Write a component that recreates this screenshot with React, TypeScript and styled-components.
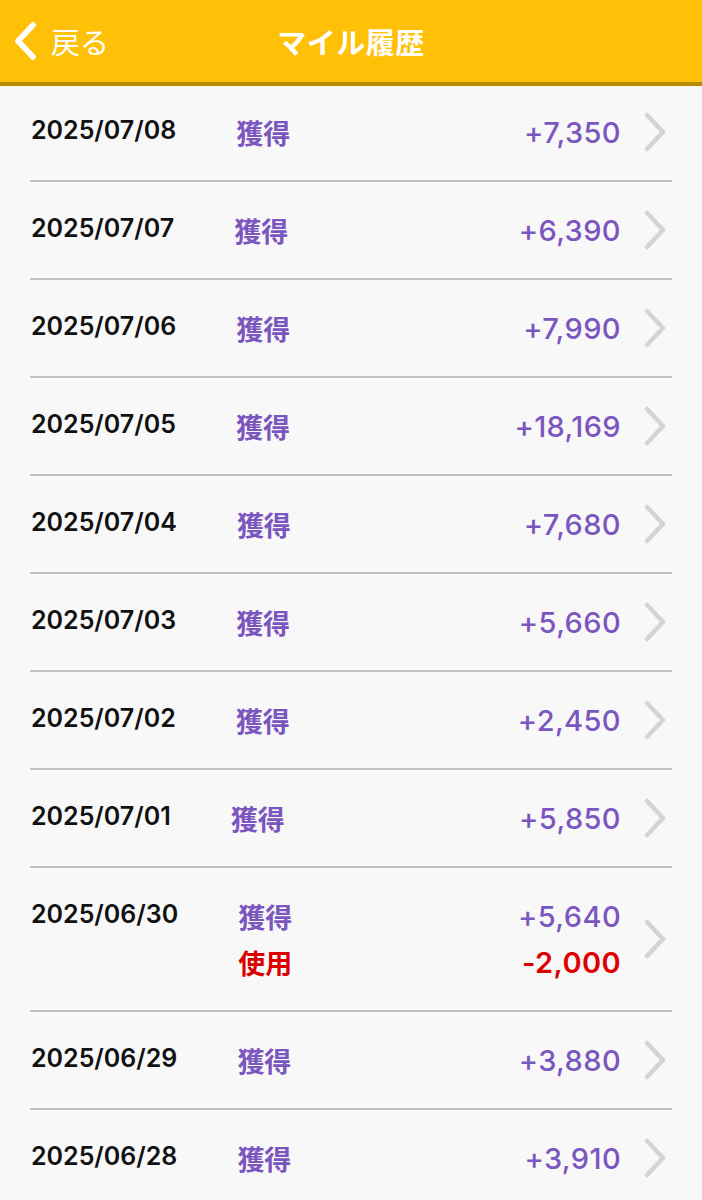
import React from 'react'
import styled, { createGlobalStyle } from 'styled-components'

type Entry = { kind: 'earn' | 'use'; amount: string }
type Day = { date: string; entries: Entry[] }

const days: Day[] = [
  { date: '2025/07/08', entries: [{ kind: 'earn', amount: '+7,350' }] },
  { date: '2025/07/07', entries: [{ kind: 'earn', amount: '+6,390' }] },
  { date: '2025/07/06', entries: [{ kind: 'earn', amount: '+7,990' }] },
  { date: '2025/07/05', entries: [{ kind: 'earn', amount: '+18,169' }] },
  { date: '2025/07/04', entries: [{ kind: 'earn', amount: '+7,680' }] },
  { date: '2025/07/03', entries: [{ kind: 'earn', amount: '+5,660' }] },
  { date: '2025/07/02', entries: [{ kind: 'earn', amount: '+2,450' }] },
  { date: '2025/07/01', entries: [{ kind: 'earn', amount: '+5,850' }] },
  {
    date: '2025/06/30',
    entries: [
      { kind: 'earn', amount: '+5,640' },
      { kind: 'use', amount: '-2,000' }
    ]
  },
  { date: '2025/06/29', entries: [{ kind: 'earn', amount: '+3,880' }] },
  { date: '2025/06/28', entries: [{ kind: 'earn', amount: '+3,910' }] }
]

const kindLabel = { earn: '獲得', use: '使用' }

export default function App() {
  return (
    <>
      <GlobalStyle />
      <Page>
        <Header>
          <BackButton>
            <svg width="26" height="38" viewBox="0 0 26 38">
              <path
                d="M20 3 L5 19 L20 35"
                fill="none"
                stroke="#fff"
                strokeWidth="5.5"
                strokeLinecap="round"
                strokeLinejoin="round"
              />
            </svg>
            <span>戻る</span>
          </BackButton>
          <Title>マイル履歴</Title>
          <div />
        </Header>
        <List>
          {days.map((day) => (
            <Row key={day.date}>
              <DateText>{day.date}</DateText>
              <Entries>
                {day.entries.map((e, i) => (
                  <EntryLine key={i}>
                    <Kind $kind={e.kind}>{kindLabel[e.kind]}</Kind>
                    <Amount $kind={e.kind}>{e.amount}</Amount>
                  </EntryLine>
                ))}
              </Entries>
              <Chevron width="26" height="40" viewBox="0 0 26 40">
                <path
                  d="M5 3 L21 20 L5 37"
                  fill="none"
                  stroke="#d4d4d4"
                  strokeWidth="4.5"
                  strokeLinecap="round"
                  strokeLinejoin="round"
                />
              </Chevron>
            </Row>
          ))}
        </List>
      </Page>
    </>
  )
}

const GlobalStyle = createGlobalStyle`
  html, body {
    margin: 0;
    padding: 0;
    overflow: hidden;
    background: #f8f8f8;
  }
`

const Page = styled.div`
  width: 702px;
  min-height: 1200px;
  background: #f8f8f8;
  font-family: Inter, 'Noto Sans CJK JP', sans-serif;
`

const Header = styled.header`
  height: 82px;
  background: #ffc107;
  border-bottom: 4px solid #b98c00;
  display: grid;
  grid-template-columns: 1fr auto 1fr;
  align-items: center;
  color: #fff;
`

const BackButton = styled.div`
  display: flex;
  align-items: center;
  gap: 12px;
  padding-left: 13px;
  font-family: 'Noto Sans CJK JP', sans-serif;
  font-size: 29px;
  font-weight: 400;
`

const Title = styled.h1`
  margin: 0;
  font-family: 'Noto Sans CJK JP', sans-serif;
  font-size: 29px;
  font-weight: 700;
  letter-spacing: 0.5px;
`

const List = styled.div`
  margin: 0 30px;
`

const Row = styled.div`
  display: flex;
  align-items: center;
  padding: 25px 4px 25px 1px;
  border-bottom: 2px solid #c2c2c2;

  &:first-child {
    padding-top: 23px;
  }
`

const DateText = styled.div`
  align-self: flex-start;
  line-height: 43px;
  font-size: 25px;
  font-weight: 600;
  color: #111;
`

const Entries = styled.div`
  flex: 1;
  display: flex;
  flex-direction: column;
  margin-left: 60px;
`

const EntryLine = styled.div`
  height: 46px;
  display: flex;
  align-items: center;
  justify-content: space-between;
`

const Kind = styled.span<{ $kind: 'earn' | 'use' }>`
  font-family: 'Noto Sans CJK JP', sans-serif;
  font-size: 27px;
  font-weight: 700;
  color: ${(p) => (p.$kind === 'earn' ? '#7b56bf' : '#dd0000')};
`

const Amount = styled.span<{ $kind: 'earn' | 'use' }>`
  font-size: 29px;
  letter-spacing: 0.4px;
  font-weight: ${(p) => (p.$kind === 'earn' ? 500 : 600)};
  color: ${(p) => (p.$kind === 'earn' ? '#7b56bf' : '#dd0000')};
`

const Chevron = styled.svg`
  flex: none;
  margin-left: 21px;
`
